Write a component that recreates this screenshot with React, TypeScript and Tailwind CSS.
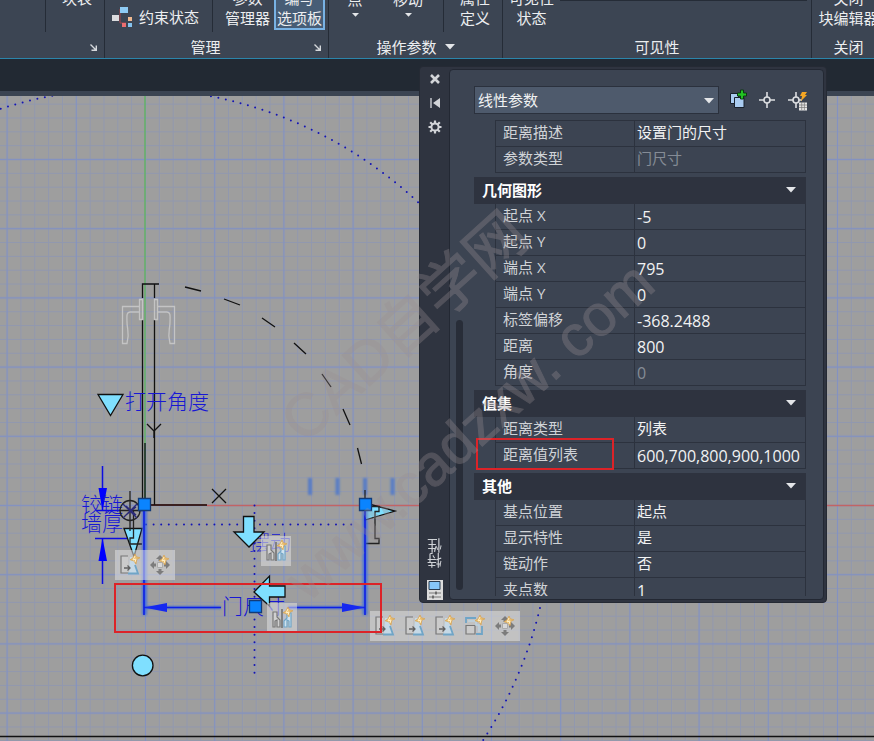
import { useState } from 'react';
import type { ReactNode } from 'react';

type Row = { label: string; value: string; readOnly?: boolean };
type Group = { title?: string; rows: Row[] };

const groups: Group[] = [
  {
    rows: [
      { label: '距离描述', value: '设置门的尺寸' },
      { label: '参数类型', value: '门尺寸', readOnly: true },
    ],
  },
  {
    title: '几何图形',
    rows: [
      { label: '起点 X', value: '-5' },
      { label: '起点 Y', value: '0' },
      { label: '端点 X', value: '795' },
      { label: '端点 Y', value: '0' },
      { label: '标签偏移', value: '-368.2488' },
      { label: '距离', value: '800' },
      { label: '角度', value: '0', readOnly: true },
    ],
  },
  {
    title: '值集',
    rows: [
      { label: '距离类型', value: '列表' },
      { label: '距离值列表', value: '600,700,800,900,1000' },
    ],
  },
  {
    title: '其他',
    rows: [
      { label: '基点位置', value: '起点' },
      { label: '显示特性', value: '是' },
      { label: '链动作', value: '否' },
      { label: '夹点数', value: '1' },
    ],
  },
];

const Caret = ({ className = '' }: { className?: string }) => (
  <svg width="10" height="6" viewBox="0 0 10 6" className={className}><path d="M0 0h10L5 5.5z" fill="#e4e6e9" /></svg>
);

const Launcher = () => (
  <button aria-label="launcher" className="w-[22px] flex justify-center">
    <svg width="7" height="7" viewBox="0 0 7 7" fill="none" stroke="#d5d8dc" strokeWidth="1.4"><path d="M.5 .5L6 6M6.3 1.5v4.8H1.5" /></svg>
  </button>
);

function RibbonPanel({ title, className, footer, children }: { title: string; className: string; footer?: ReactNode; children: ReactNode }) {
  return (
    <section className={`flex flex-col shrink-0 overflow-hidden border-r border-[#252c37] ${className}`}>
      <div className="h-9 flex items-end overflow-hidden">{children}</div>
      <div className="h-[22px] flex items-center">
        <h2 className="flex-1 flex items-center justify-center gap-2">{title}{title === '操作参数' && <Caret />}</h2>
        {footer}
      </div>
    </section>
  );
}

const Divider = () => <div className="w-px h-8 shrink-0 self-start bg-[#252c37]" />;

function Ribbon() {
  return (
    <header className="flex h-[59px] bg-[#3c4553] border-b border-[#2b85ab] overflow-hidden text-[#eceef0] leading-5 whitespace-nowrap">
      <RibbonPanel title="" className="w-[105px]" footer={<Launcher />}>
        <div className="w-[45px] shrink-0" />
        <Divider />
        <button className="mx-4 pb-7">块表</button>
      </RibbonPanel>
      <RibbonPanel title="管理" className="w-[224px]" footer={<Launcher />}>
        <button className="flex-1 flex items-center pl-[7px] gap-[3px] pb-2">
          <svg width="24" height="22" viewBox="0 0 24 22">
            <path d="M8 3v14h6" fill="none" stroke="#a3474b" strokeWidth="1" />
            <path d="M8 1h8v6H8z" fill="#8ecbf5" />
            <path d="M0 9h7v6H0z" fill="#dcdcdf" />
            <path d="M16 11h4v4h-4z" fill="#f0b990" />
            <path d="M10 17h4v4h-4z" fill="#ee6e70" />
            <path d="M16 17h4v4h-4z" fill="#85c3ef" />
          </svg>
          约束状态
        </button>
        <Divider />
        <button className="pl-3 pr-1 pb-2">参数<br />管理器</button>
        <button className="bg-[#475d76] border-2 border-t-0 border-[#78b2e4] px-px h-[30px] mb-[6px] mr-[3px] flex items-end">
          <span className="block">编写<br />选项板</span>
        </button>
      </RibbonPanel>
      <RibbonPanel title="操作参数" className="w-[174px]">
        <button className="w-[52px] pb-[18px] flex flex-col items-center">点<Caret className="w-[7px] mt-[3px]" /></button>
        <button className="flex-1 pb-[18px] pr-2 flex flex-col items-center">移动<Caret className="w-[7px] mt-[3px]" /></button>
        <Divider />
        <button className="w-[58px] pl-1 pb-2">属性<br />定义</button>
      </RibbonPanel>
      <RibbonPanel title="可见性" className="w-[309px]">
        <button className="px-[6px] pb-2">可见性<br />状态</button>
        <div className="flex-1 self-start mr-1 h-px bg-[#252c37]" />
      </RibbonPanel>
      <RibbonPanel title="关闭" className="w-[74px]">
        <button className="w-full pb-2">关闭<br />块编辑器</button>
      </RibbonPanel>
    </header>
  );
}

const Spark = ({ x = 11, y = 0 }: { x?: number; y?: number }) => (
  <g transform={`translate(${x} ${y})`}>
    <path d="M5 0l1.3 2.7L10 3.8 6.9 5.3 6 10 4 7 0 5.8l3-2z" fill="#e9be70" stroke="#d6a04a" strokeWidth=".6" />
    <path d="M5 2L3 6l3-1-1 3" fill="none" stroke="#fff0c8" strokeWidth="1" />
  </g>
);

const StretchIcon = () => (
  <svg width="22" height="22" viewBox="0 0 22 22">
    <path d="M11 3h3l5 17H10z" fill="#c6d9e6" />
    <path d="M9 2H2v17h7" fill="#cbcbcb" stroke="#777" strokeWidth="1.2" />
    <path d="M16 11l3 8.5H9" fill="none" stroke="#6fa5c7" strokeWidth="1.8" />
    <path d="M5 14h6M8.500 11.500l2.500 2.500-2.500 2.500" fill="none" stroke="#606060" strokeWidth="1.3" />
    <Spark />
  </svg>
);

const ScaleIcon = () => (
  <svg width="22" height="22" viewBox="0 0 22 22">
    <path d="M2 8V3h10M18 11v8h-6" fill="none" stroke="#6fa5c7" strokeWidth="1.8" />
    <path d="M2 10.500h9v8.500H2z" fill="#cbcbcb" stroke="#777" strokeWidth="1.2" />
    <path d="M4 6h8v4h3v7" fill="none" stroke="#bcd3e2" strokeWidth="1.5" />
    <Spark />
  </svg>
);

const MoveIcon = () => (
  <svg width="22" height="22" viewBox="0 0 22 22">
    <g fill="#7c7c7c">
      <path d="M11 1l4 4h-2.500v2h-3V5H7z" />
      <path d="M11 21l4-4h-2.500v-2h-3v2H7z" />
      <path d="M1 11l4-4v2.500h2v3H5V15z" />
      <path d="M21 11l-4-4v2.500h-2v3h2V15z" />
    </g>
    <path d="M8.500 8.500h5v5h-5z" fill="#d8d8d8" stroke="#aaa" />
    <Spark x={10} y={1} />
  </svg>
);

const FlipIcon = () => (
  <svg width="22" height="22" viewBox="0 0 22 22">
    <path d="M2 5h4v5l3 3v7H6v-7l-2 1v6H2z" fill="#d0d0d0" stroke="#777" strokeWidth="1.2" />
    <path d="M11 2v19" stroke="#666" strokeWidth="1.4" />
    <path d="M20 6h-4v5l-3 3v6h3v-7l2 1v6h2z" fill="#cfe2ee" stroke="#6fa5c7" strokeWidth="1.2" />
    <Spark x={12} y={0} />
  </svg>
);

function GripBar({ className, icons, name }: { className: string; icons: ReactNode[]; name: string }) {
  return (
    <div className={`absolute flex bg-[#e0e0e0]/55 ${className}`}>
      {icons.map((icon, i) => (
        <button key={i} aria-label={`${name} ${i + 1}`} className="size-[30px] grid place-items-center">{icon}</button>
      ))}
    </div>
  );
}

function Drawing() {
  return (
    <svg className="absolute inset-0 w-full h-full" aria-hidden="true">
      <defs>
        <pattern id="minor" x="145" y="505" width="13.84" height="13.84" patternUnits="userSpaceOnUse">
          <path d="M.5 0v14M0 .5h14" stroke="#8c96b4" strokeWidth="1" opacity=".75" />
        </pattern>
        <pattern id="major" x="144" y="504" width="69.2" height="69.2" patternUnits="userSpaceOnUse">
          <path d="M1.500 0v70M0 1.500h70" stroke="#7f90c6" strokeWidth="1.300" opacity=".75" />
        </pattern>
        <filter id="glow"><feGaussianBlur stdDeviation="0.9" /></filter>
      </defs>
      <g transform="translate(0 -96)" fill="none" strokeWidth="1.3">
        <rect width="100%" height="200%" fill="url(#minor)" />
        <rect width="100%" height="200%" fill="url(#major)" />

        {/* axes */}
        <path d="M207 505.500H4000" stroke="#c26464" />
        <path d="M145 96V443" stroke="#68b168" strokeWidth="1.600" />
        <path d="M145 443V505" stroke="#16301a" strokeWidth="1.600" />
        <path d="M145 505H207" stroke="#3a2020" strokeWidth="2" />

        {/* door leaf, handle and swing */}
        <g stroke="#111">
          <path d="M142.500 298V284H159M154.500 284V298M142.500 320V505M154.500 320V505" />
          <path d="M185 287l16 4M224 299l16 6M262 318l13 9M294 343l12 11M322 374l9 13M343 409l7 16M357.500 448l4 16" />
          <path d="M212 489l14 14M226 489l-14 14M147 424l7 7l7-7M154 431v7" />
          <path d="M0 736.500H4000" />
        </g>
        <g stroke="#c4c4c4">
          <path d="M139.500 299.500h3v20h-3zM139 306.500H122.500V343.500H127C130 332 127 330 127 322C127 317 126 312 130 312H139" />
          <path d="M157.500 299.500h-3v20h3zM158 306.500H174.500V343.500H170C167 332 170 330 170 322C170 317 171 312 167 312H158" />
        </g>

        {/* construction dots */}
        <g stroke="#1414b4" strokeWidth="2" strokeLinecap="round" strokeDasharray="0 7.600">
          <circle cx="130" cy="510" r="421.500" />
          <path d="M146 524.500H354M254.500 505.500V680" />
        </g>

        {/* wall thickness */}
        <g stroke="#0d0de0" strokeWidth="1.500">
          <path d="M102.500 466V511M102.500 538V584M95 538.500H127M120 510.500H96" />
          <path d="M98.500 488h8.500l-4.500 23zM98.500 561h8.500l-4.500-23z" fill="#0000ff" stroke="none" />
        </g>
        <g fill="#1818d4" fontSize="21" className="font-['Noto_Sans_CJK_SC',sans-serif] font-light">
          <text x="125" y="409">打开角度</text>
          <text x="81" y="512">铰链</text>
          <text x="81" y="531">墙厚</text>
          <text x="249" y="550" opacity=".8">摆动</text>
          <text x="222" y="614">门尺寸</text>
        </g>

        {/* grips */}
        <g fill="#7fdfff" stroke="#111">
          <path d="M98 394.500h25l-12.500 21z" />
          <path d="M124 528.500h18l-8 28z" />
          <path d="M365 503l30 8l-30 9z" />
          <path d="M243.500 516.500h10.500v15.500h10l-15 15l-15-15h9.500z" />
          <path d="M254 592l15.500-16v10H285v11h-15.500v9z" />
          <circle cx="142.700" cy="665.500" r="10.300" />
        </g>
        <g stroke="#222">
          <circle cx="130" cy="510.500" r="10" />
          <path d="M130 491v40M120 510.500h25M133.500 511v27h-3.500v6h12" />
          <path d="M123 504l14 14M137 504l-14 14M126 506l10 9M126 515l10-8" stroke="#2a2a78" />
          <path d="M371 506.500h8v5h-4v27h4v5h-13" />
        </g>

        {/* selected dimension */}
        <g filter="url(#glow)" stroke="#2f62ec" strokeWidth="5" opacity=".7">
          <path d="M144.500 505V615M365 505V615" />
          <path d="M144 607.500H221M288 607.500H365" strokeWidth="3" />
          <path d="M310 478v17M337.500 478v17M365 478v17M392.500 478v17" stroke="#3c70d6" strokeWidth="4" />
        </g>
        <path d="M365 490V500" stroke="#222" />
        <g stroke="#0d1fe4" strokeWidth="1.600">
          <path d="M144 505V615M365 505V615M144 607.500H221M288 607.500H365" />
          <path d="M144 607.500l23-4.500v9zM365 607.500l-23-4.500v9z" fill="#1528f0" stroke="none" />
        </g>
        <g fill="#0a84ff" stroke="#123b78">
          <path d="M138.500 498.500h12v12h-12zM359.500 498.500h12v12h-12zM249.500 600.500h12v12h-12z" />
        </g>
      </g>
    </svg>
  );
}

const titleIcons = [
  { name: '关闭', art: <path d="M4 4l8 8M12 4l-8 8" stroke="#d2d4d8" strokeWidth="2.6" /> },
  { name: '自动隐藏', art: <><path d="M4 3v10" stroke="#b9bcc2" strokeWidth="1.6" /><path d="M13 3v10L6 8z" fill="#d2d4d8" /></> },
  {
    name: '设置',
    art: (
      <>
        <path d="M8 1.500v13M1.500 8h13M3.200 3.200l9.600 9.600M12.800 3.200l-9.600 9.600" stroke="#d2d4d8" strokeWidth="2.200" />
        <circle cx="8" cy="8" r="3.600" fill="#2f3440" stroke="#d2d4d8" strokeWidth="2" />
      </>
    ),
  },
];

const toolIcons = [
  {
    name: '切换 PICKADD',
    art: (
      <>
        <path d="M3.500 4.500h8v10h-8z" fill="#a9cbf0" stroke="#18202c" />
        <path d="M7.500 8.500h9.500v10H7.500z" fill="#a9cbf0" stroke="#18202c" />
        <path d="M13.500 1h3v3h3v3h-3v3h-3V7h-3V4h3z" fill="#22c322" stroke="#0a3a10" />
      </>
    ),
  },
  {
    name: '选择对象',
    art: <g stroke="#dcdee1" strokeWidth="1.600" fill="none"><circle cx="10" cy="11" r="3" /><path d="M10 3v5M10 14v5M2 11h5M13 11h5" /></g>,
  },
  {
    name: '快速选择',
    art: (
      <>
        <g stroke="#dcdee1" strokeWidth="1.600" fill="none"><circle cx="9" cy="11" r="3" /><path d="M9 3v5M9 14v5M1 11h5M12 11h3" /></g>
        <path d="M15 3h5l-2 3h2l-6 6 1-5h-2z" fill="#f5a623" />
        <path d="M12 13.500h8v8h-8z" fill="#e4e4e4" />
        <path d="M12 16h8M12 18.500h8M14.700 13v8M17.400 13v8" stroke="#777" strokeWidth=".7" />
      </>
    ),
  },
];

function PropertyGroup({ title, rows }: Group) {
  const [open, setOpen] = useState(true);
  return (
    <div className="mb-1">
      {title && (
        <button onClick={() => setOpen(!open)} className="w-full h-[27px] bg-[#2e333f] flex items-center justify-between pl-2 pr-[10px] pb-[2px] text-white font-bold">
          {title}
          <Caret />
        </button>
      )}
      {open && (
        <table className={`w-[calc(100%-21px)] ml-[21px] table-fixed border-separate border-spacing-0 border-[#2c323e] ${title ? '' : 'border-t'}`}>
          <tbody>
            {rows.map(row => (
              <tr key={row.label} className="h-[26px]">
                <th scope="row" className="w-[139px] p-0 pl-[7px] pb-1 text-left font-normal text-[#d0d3d7] border-l border-b border-[#2c323e]">{row.label}</th>
                <td className={`p-0 pl-[2px] border-x border-b border-[#2c323e] ${/^[-\d]/.test(row.value) ? 'text-base leading-5' : 'pb-[3px]'} ${row.readOnly ? 'text-[#858c96]' : 'text-[#f1f2f3]'}`}>{row.value}</td>
              </tr>
            ))}
          </tbody>
        </table>
      )}
    </div>
  );
}

function PropertiesPalette() {
  const [kind, setKind] = useState('线性参数');
  return (
    <aside className="absolute left-[419px] top-[66px] w-[408px] h-[537px] flex bg-[#2f3440] border border-[#252a34] rounded leading-5">
      <div className="w-[29px] flex flex-col items-center pb-[2px]">
        {titleIcons.map(icon => (
          <button key={icon.name} aria-label={icon.name} className="h-6 flex items-center">
            <svg width="16" height="16" viewBox="0 0 16 16" fill="none">{icon.art}</svg>
          </button>
        ))}
        <h2 className="mt-auto [writing-mode:vertical-rl] rotate-180 text-[#d0d3d7]">特性</h2>
        <svg width="16" height="20" viewBox="0 0 16 20" className="mt-3">
          <path d="M0 0h16v20H0z" fill="#dcdcdc" />
          <path d="M2 1.500h11v8H2z" fill="#86c7fa" stroke="#2a3c50" />
          <path d="M2 13h12M2 17h12" stroke="#777" strokeWidth="1" />
          <path d="M9 11.500v3M6 15.500v3" stroke="#555" strokeWidth="1.500" />
        </svg>
      </div>
      <div className="flex-1 my-[2px] mr-[2px] flex min-w-0 bg-[#3c4452] border border-[#232833] rounded pt-4 pb-[3px] pr-[17px]">
        <div className="w-6 flex flex-col pl-[6px] pb-[6px]">
          <div className="mt-auto w-[7px] h-[270px] rounded-full bg-[#282d38]" />
        </div>
        <div className="flex-1 min-w-0 flex flex-col">
          <div className="flex items-center gap-2 mb-[6px]">
            <div className="relative w-[245px] shrink-0">
              <select aria-label="对象类型" value={kind} onChange={e => setKind(e.target.value)} className="block w-full h-7 appearance-none bg-[#4e5a6c] border border-[#2b313d] pl-[3px] text-[#f1f2f3]">
                <option>线性参数</option>
              </select>
              <Caret className="absolute right-[5px] top-3 pointer-events-none" />
            </div>
            {toolIcons.map(icon => (
              <button key={icon.name} aria-label={icon.name} className="shrink-0">
                <svg width="22" height="22" viewBox="0 0 22 22">{icon.art}</svg>
              </button>
            ))}
          </div>
          <div className="flex-1 min-h-0 overflow-hidden">
            {groups.map((group, i) => <PropertyGroup key={i} {...group} />)}
          </div>
        </div>
      </div>
    </aside>
  );
}

// Red call-outs and the site watermark lie above everything else
function Markup() {
  return (
    <svg className="absolute inset-0 w-full h-full pointer-events-none">
      <g fill="none" stroke="#dc2328" strokeWidth="2">
        <path d="M115 584h266v48H115zM477 439h136v30H477z" />
      </g>
      <g fill="#9a9094" stroke="#9a9094" opacity=".32" className="font-['Liberation_Sans','Noto_Sans_CJK_SC',sans-serif]">
        <text transform="translate(304 445) rotate(-42)" fontSize="60">CAD自学网</text>
        <text transform="translate(308 603) rotate(-42)" fontSize="58">www.cadzxw. com</text>
      </g>
    </svg>
  );
}

export default function App() {
  return (
    <div className="relative min-h-screen flex flex-col overflow-hidden bg-[#222933] text-[15px] font-['Open_Sans','Noto_Sans_CJK_SC',sans-serif]">
      <Ribbon />
      <div className="h-8" />
      <div className="h-[5px] bg-[#3b4452]" />
      <main className="relative flex-1 bg-[#9e9e9e]">
        <Drawing />
        <GripBar name="拉伸" className="left-[115px] top-[454px]" icons={[<StretchIcon />, <MoveIcon />]} />
        <GripBar name="翻转" className="left-[261px] top-[440px]" icons={[<FlipIcon />]} />
        <GripBar name="翻转门" className="left-[267px] top-[507px]" icons={[<FlipIcon />]} />
        <GripBar name="动作" className="left-[370px] top-[515px]" icons={[<StretchIcon />, <StretchIcon />, <StretchIcon />, <ScaleIcon />, <MoveIcon />]} />
      </main>
      <PropertiesPalette />
      <Markup />
    </div>
  );
}
